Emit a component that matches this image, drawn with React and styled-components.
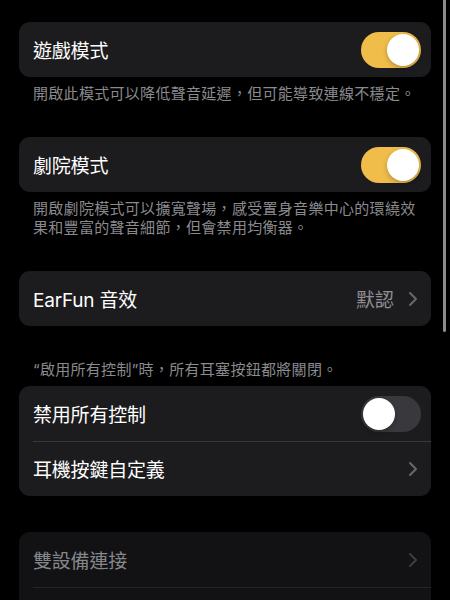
import React from "react";
import styled, { createGlobalStyle } from "styled-components";

//global page

const GlobalStyle = createGlobalStyle`
  html, body {
    margin: 0;
    padding: 0;
    background: #000;
    height: 600px;
    overflow: hidden;
  }
  body {
    font-family: Inter, "Noto Sans CJK TC", "Noto Sans", sans-serif;
    -webkit-font-smoothing: antialiased;
  }
`;

const Chevron = ({ dim }) => (
  <svg width="8" height="14" viewBox="0 0 8 14">
    <polyline
      points="1,1 7,7 1,13"
      fill="none"
      stroke={dim ? "#3e3e42" : "#68686d"}
      strokeWidth="2"
      strokeLinecap="round"
      strokeLinejoin="round"
    />
  </svg>
);

const Row = ({ label, value, toggle, chevron, dim }) => (
  <RowContainer>
    <Label dim={dim}>{label}</Label>
    {value && <Value>{value}</Value>}
    {toggle !== undefined && (
      <Switch on={toggle}>
        <span />
      </Switch>
    )}
    {chevron && <Chevron dim={dim} />}
  </RowContainer>
);

const App = () => {
  return (
    <>
      <GlobalStyle />
      <Page>
        <Section>
          <Card>
            <Row label="遊戲模式" toggle={true} />
          </Card>
          <Footer>開啟此模式可以降低聲音延遲，但可能導致連線不穩定。</Footer>
        </Section>

        <Section>
          <Card>
            <Row label="劇院模式" toggle={true} />
          </Card>
          <Footer>
            開啟劇院模式可以擴寬聲場，感受置身音樂中心的環繞效果和豐富的聲音細節，但會禁用均衡器。
          </Footer>
        </Section>

        <Section>
          <Card>
            <Row label="EarFun 音效" value="默認" chevron />
          </Card>
        </Section>

        <Section>
          <Header>“啟用所有控制”時，所有耳塞按鈕都將關閉。</Header>
          <Card>
            <Row label="禁用所有控制" toggle={false} />
            <Divider />
            <Row label="耳機按鍵自定義" chevron />
          </Card>
        </Section>

        <Section className="last">
          <Card dim>
            <Row label="雙設備連接" chevron dim />
            <Divider dim />
            <Row label="" chevron dim />
          </Card>
        </Section>
      </Page>
      <ScrollThumb />
    </>
  );
};

const Page = styled.div`
  display: flex;
  flex-direction: column;
  gap: 34px;
  padding: 22px 19px 0;
  .last {
    margin-top: 2px;
  }
`;

const Section = styled.section`
  display: flex;
  flex-direction: column;
`;

const Card = styled.div`
  background: ${(p) => (p.dim ? "#121214" : "#1c1c1e")};
  border-radius: 11px;
  overflow: hidden;
`;

const RowContainer = styled.div`
  height: 55px;
  display: flex;
  align-items: center;
  padding: 0 14px 0 14px;
  box-sizing: border-box;
`;

const Label = styled.div`
  flex: 1;
  font-size: 19px;
  letter-spacing: -0.2px;
  color: ${(p) => (p.dim ? "#86868a" : "#ffffff")};
  white-space: nowrap;
`;

const Value = styled.div`
  font-size: 19px;
  color: #8e8e93;
  margin-right: 15px;
`;

const Switch = styled.div`
  width: 60px;
  height: 36px;
  border-radius: 18px;
  margin-right: -4px;
  background: ${(p) => (p.on ? "#f0bd4b" : "#39393d")};
  display: flex;
  align-items: center;
  justify-content: ${(p) => (p.on ? "flex-end" : "flex-start")};
  padding: 0 2px;
  box-sizing: border-box;
  span {
    width: 32px;
    height: 32px;
    border-radius: 50%;
    background: #fff;
    box-shadow: 0 2px 5px rgba(0, 0, 0, 0.25);
  }
`;

const Divider = styled.div`
  height: 1px;
  margin: 0 0 -1px 14px;
  background: ${(p) => (p.dim ? "#242427" : "#38383a")};
`;

const Footer = styled.p`
  margin: 0;
  padding: 7px 14px 0;
  font-size: 15px;
  letter-spacing: 0.3px;
  line-height: 19px;
  color: #8a8a8f;
`;

const Header = styled.p`
  margin: 0;
  padding: 0 14px 7px;
  font-size: 15px;
  letter-spacing: 0.3px;
  line-height: 19px;
  color: #8a8a8f;
`;

const ScrollThumb = styled.div`
  position: fixed;
  top: -4px;
  right: 4px;
  width: 3px;
  height: 336px;
  border-radius: 2px;
  background: #8c8c8c;
`;

export default App;
